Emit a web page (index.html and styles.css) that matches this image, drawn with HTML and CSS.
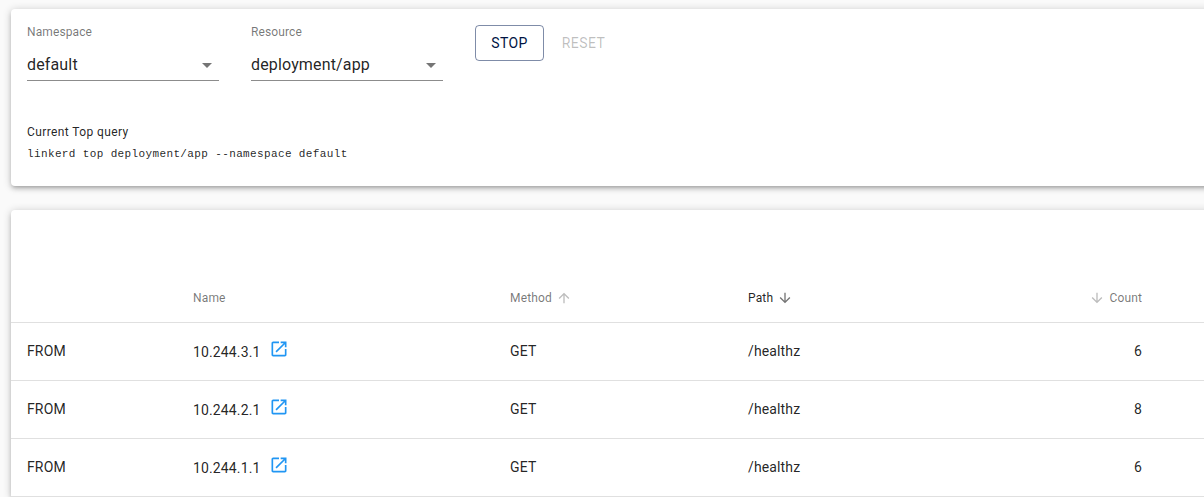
FILE: index.html
```html
<!DOCTYPE html>
<html lang="en">
<head>
<meta charset="utf-8">
<title>Top</title>
<link rel="stylesheet" href="styles.css">
</head>
<body>
<svg width="0" height="0" class="sprite" aria-hidden="true">
  <symbol id="caret" viewBox="0 0 24 24"><path d="M7 10l5 5 5-5z"/></symbol>
  <symbol id="down" viewBox="0 0 24 24"><path d="M20 12l-1.41-1.41L13 16.17V4h-2v12.17l-5.58-5.59L4 12l8 8 8-8z"/></symbol>
  <symbol id="open" viewBox="0 0 24 24"><path d="M19 19H5V5h7V3H5c-1.11 0-2 .9-2 2v14c0 1.1.89 2 2 2h14c1.1 0 2-.9 2-2v-7h-2v7zM14 3v2h3.59l-9.83 9.83 1.41 1.41L19 6.41V10h2V3h-7z"/></symbol>
</svg>
<main class="page">
  <section class="card query">
    <div class="controls">
      <div class="field"><label class="label">Namespace</label><div class="select"><span class="value">default</span><svg class="caret"><use href="#caret"/></svg></div></div>
      <div class="field"><label class="label">Resource</label><div class="select"><span class="value">deployment/app</span><svg class="caret"><use href="#caret"/></svg></div></div>
      <div class="buttons"><button class="btn stop">STOP</button><button class="btn reset" disabled>RESET</button></div>
    </div>
    <div class="caption">Current Top query</div>
    <code class="command">linkerd top deployment/app --namespace default</code>
  </section>
  <section class="card results">
    <table class="table">
      <colgroup><col class="c-dir"><col class="c-name"><col class="c-method"><col class="c-path"><col class="c-count"><col></colgroup>
      <thead>
        <tr>
          <th></th>
          <th>Name</th>
          <th><span class="sort">Method<svg class="arrow up"><use href="#down"/></svg></span></th>
          <th class="active"><span class="sort">Path<svg class="arrow"><use href="#down"/></svg></span></th>
          <th class="num"><span class="sort reverse">Count<svg class="arrow"><use href="#down"/></svg></span></th>
          <th></th>
        </tr>
      </thead>
      <tbody>
        <tr><td>FROM</td><td><div class="name"><span>10.244.3.1</span><svg class="open"><use href="#open"/></svg></div></td><td>GET</td><td>/healthz</td><td class="num">6</td><td></td></tr>
        <tr><td>FROM</td><td><div class="name"><span>10.244.2.1</span><svg class="open"><use href="#open"/></svg></div></td><td>GET</td><td>/healthz</td><td class="num">8</td><td></td></tr>
        <tr><td>FROM</td><td><div class="name"><span>10.244.1.1</span><svg class="open"><use href="#open"/></svg></div></td><td>GET</td><td>/healthz</td><td class="num">6</td><td></td></tr>
      </tbody>
    </table>
  </section>
</main>
</body>
</html>
```
FILE: styles.css
```css
* { box-sizing: border-box; }
body {
  margin: 0;
  height: 497px;
  overflow: hidden;
  background: #fafafa;
  font-family: Roboto, sans-serif;
  color: rgba(0, 0, 0, 0.87);
}
svg { fill: currentColor; flex: none; }
.sprite { display: block; height: 0; }
.page { padding: 9px 0 0 11px; width: 1240px; }
.card {
  background: #fff;
  border-radius: 4px;
  box-shadow: 0 1px 8px rgba(0, 0, 0, 0.2), 0 3px 4px rgba(0, 0, 0, 0.14), 0 3px 3px -2px rgba(0, 0, 0, 0.12);
}
.query { height: 177px; padding: 16px; margin-bottom: 24px; }
.controls { display: flex; gap: 32px; height: 98px; }
.field { width: 192px; }
.label {
  display: block;
  font-size: 12px;
  line-height: 14px;
  letter-spacing: 0.11px;
  color: rgba(0, 0, 0, 0.54);
}
.select {
  display: flex;
  align-items: center;
  height: 32px;
  margin-top: 10px;
  border-bottom: 1px solid #8c8c8c;
}
.value { flex: 1; font-size: 16px; letter-spacing: 0.15px; }
.caret { width: 24px; height: 24px; color: rgba(0, 0, 0, 0.54); }
.buttons { display: flex; align-items: flex-start; }
.btn {
  height: 36px;
  padding: 0;
  border: 0;
  background: none;
  font: 400 14px/36px Roboto, sans-serif;
  letter-spacing: 0.4px;
}
.stop {
  width: 69px;
  line-height: 34px;
  border: 1px solid rgba(0, 26, 82, 0.5);
  border-radius: 4px;
  color: #001443;
}
.reset { width: 79px; color: rgba(0, 0, 0, 0.26); }
.caption { font-size: 12px; line-height: 20px; letter-spacing: 0.4px; margin-top: -1px; }
.command {
  display: block;
  margin-top: 2px;
  font: 11px/20px "Liberation Mono", monospace;
  letter-spacing: 0.37px;
}
.results { height: 287px; padding-top: 64px; border-radius: 4px 4px 0 0; }
.table { width: 100%; table-layout: fixed; border-collapse: separate; border-spacing: 0; }
.c-dir { width: 166px; }
.c-name { width: 317px; }
.c-method { width: 238px; }
.c-path { width: 284px; }
.c-count { width: 142px; }
th, td { padding: 0 0 0 16px; text-align: left; border-bottom: 1px solid #e0e0e0; }
th {
  height: 49px;
  font-size: 12px;
  font-weight: 400;
  letter-spacing: 0.15px;
  color: rgba(0, 0, 0, 0.54);
}
td { height: 58px; padding-bottom: 2px; font-size: 14px; letter-spacing: 0.13px; }
th.num, td.num { text-align: right; padding-right: 16px; }
.sort { display: inline-flex; align-items: center; vertical-align: middle; }
.reverse { flex-direction: row-reverse; }
.active { color: rgba(0, 0, 0, 0.87); }
.arrow { width: 16px; height: 16px; margin: 0 4px; color: #bdbdbd; }
.active .arrow { color: #757575; }
.up { transform: rotate(180deg); }
.name { display: flex; align-items: center; }
.name span { margin-top: 2px; }
.open { width: 20px; height: 20px; margin: -4px 0 0 9px; color: #2196f3; }
```
